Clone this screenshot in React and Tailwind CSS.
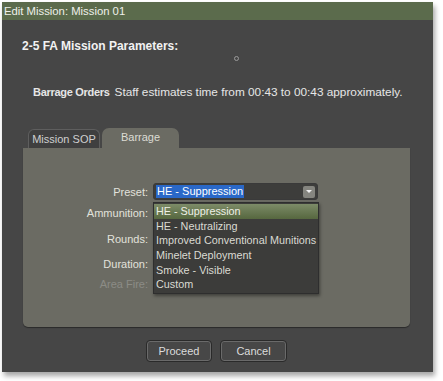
const presets = [
  'HE - Suppression',
  'HE - Neutralizing',
  'Improved Conventional Munitions',
  'Minelet Deployment',
  'Smoke - Visible',
  'Custom',
]

function FieldRow({ label, height, dim, children }) {
  return (
    <div className={`flex items-center ${height}`}>
      <span className={`w-[130px] shrink-0 pr-[5px] text-right ${dim ? 'text-[#8c8c86]' : 'text-[#e2e2dc]'}`}>
        {label}
      </span>
      {children}
    </div>
  )
}

export default function App() {
  return (
    <div className="min-h-screen bg-white pl-[2px] pt-[2px] font-['Liberation_Sans',sans-serif] text-[11px] leading-[12px] whitespace-nowrap">
      <div className="flex h-[370px] w-[431px] flex-col bg-[#464646] shadow-[2px_4px_5px_rgba(0,0,0,0.35)]">
        <div className="flex h-[18px] shrink-0 items-center bg-[#5b6b4c] pl-[2px] text-[11.3px] text-[#eef0ea]">
          Edit Mission: Mission 01
        </div>

        <div className="h-[12px] shrink-0 mt-[20px] pl-[20px] text-[12px] font-bold text-[#f2f2f2]">2-5 FA Mission Parameters:</div>
        <div className="ml-[232px] mt-[4px] h-[5px] w-[5px] shrink-0 rounded-full border border-[#9a9a9a]" />

        <div className="mt-[25px] flex h-[12px] shrink-0 items-baseline pl-[31px] text-[#e6e6e6]">
          <span className="text-[11px] font-bold tracking-[-0.3px]">Barrage Orders</span>
          <span className="ml-[5px] text-[11.8px]">Staff estimates time from 00:43 to 00:43 approximately.</span>
        </div>

        <div className="mt-[30px] flex h-[20px] shrink-0 items-end pl-[23px]">
          <div className="ml-[3px] flex h-[19px] w-[72px] items-center justify-center rounded-t-[6px] border border-b-0 border-[#5e5e5e] bg-[#3f3f3f] text-[#cfcfcf]">
            Mission SOP
          </div>
          <div className="ml-[2px] flex h-[20px] w-[77px] items-start justify-center rounded-t-[7px] bg-[#6b6b63] pt-[3px] text-[#dcdcd4]">
            Barrage
          </div>
        </div>

        <div className="relative ml-[21px] h-[179px] w-[387px] shrink-0 rounded-b-[5px] bg-[#6b6b63] shadow-[0_1px_1px_rgba(0,0,0,0.4)]">
          <div className="pt-[35px]">
            <FieldRow label="Preset:" height="h-[17px]">
              <div className="flex h-[17px] w-[165px] items-center justify-between rounded-[3px] border border-[#3a3a3a] bg-[#3d3d3b] pl-[2px] pr-[2px]">
                <span className="bg-[#2a68c8] px-[1px] leading-[13px] text-white">HE - Suppression</span>
                <span className="flex h-[12px] w-[12px] items-center justify-center rounded-[2px] bg-[#85857f]">
                  <span className="h-0 w-0 border-x-[3px] border-t-[3px] border-x-transparent border-t-[#f0f0f0]" />
                </span>
              </div>
            </FieldRow>
            <FieldRow label="Ammunition:" height="h-[25px]" />
            <FieldRow label="Rounds:" height="h-[28px]" />
            <FieldRow label="Duration:" height="h-[22px]" />
            <FieldRow label="Area Fire:" height="h-[17px]" dim />
          </div>

          <div className="absolute left-[130px] top-[54px] w-[166px] border border-[#2e2e2e] bg-[#3c3c3a] py-[1px] text-[10.8px] text-[#dadad2] shadow-[1px_2px_3px_rgba(0,0,0,0.4)]">
            {presets.map((p, i) => (
              <div
                key={p}
                className={`h-[14.7px] pl-[2px] leading-[14.7px] ${i === 0 ? 'bg-gradient-to-b from-[#7d8c68] to-[#56673f] text-[#eef0e6]' : ''}`}
              >
                {p}
              </div>
            ))}
          </div>
        </div>

        <div className="mt-[13px] flex justify-center gap-[8px] pr-[2px]">
          <button className="h-[22px] w-[66px] rounded-[4px] border border-[#2a2a2a] bg-[#474747] text-[#dcdcdc] shadow-[inset_0_0_0_1px_#6a6a6a]">
            Proceed
          </button>
          <button className="h-[22px] w-[67px] rounded-[4px] border border-[#2a2a2a] bg-[#474747] text-[#dcdcdc] shadow-[inset_0_0_0_1px_#6a6a6a]">
            Cancel
          </button>
        </div>
      </div>
    </div>
  )
}
